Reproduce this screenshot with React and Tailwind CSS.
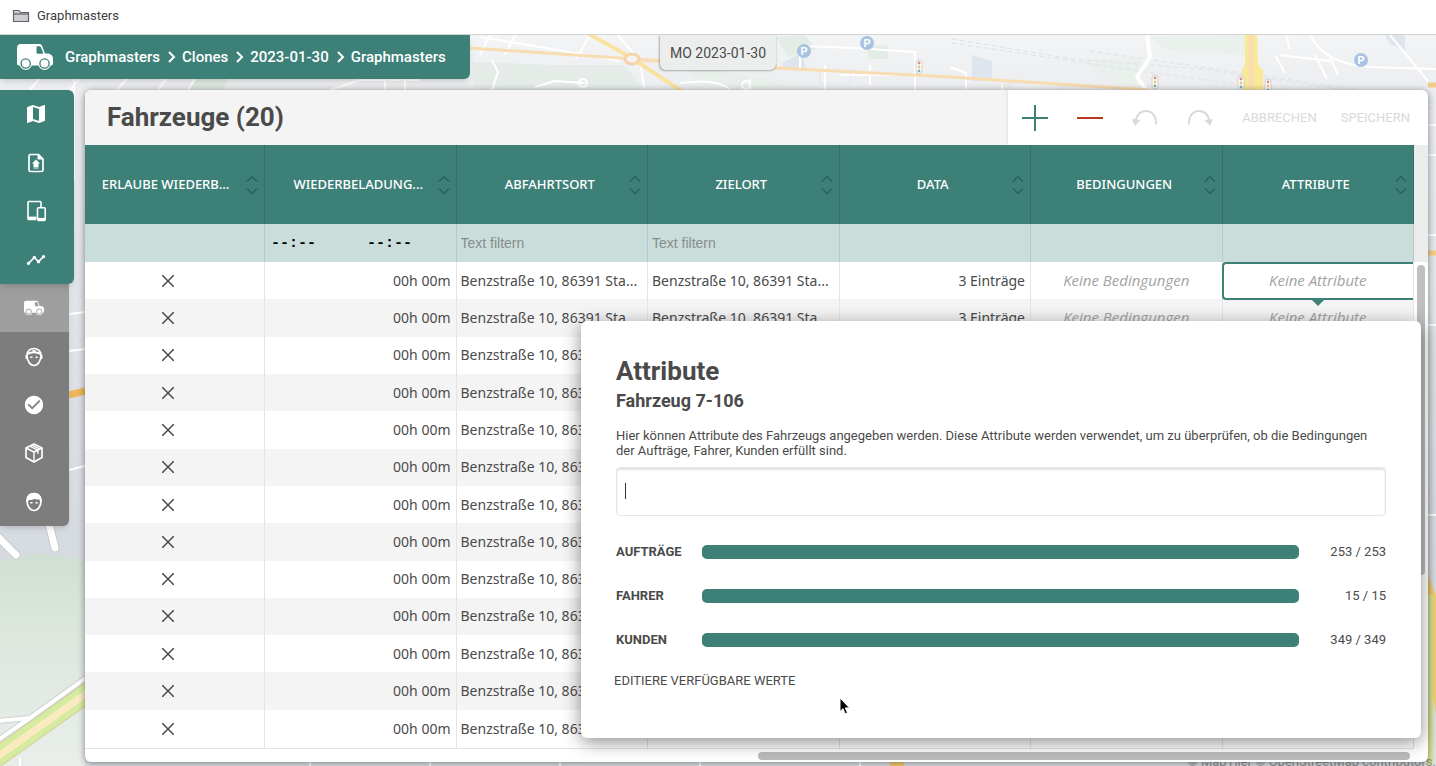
import React from "react";
import { MdMap, MdTimeline, MdCheckCircle } from "react-icons/md";

const crumbs = ["Graphmasters", "Clones", "2023-01-30", "Graphmasters"];

const columns = [
  { title: "ERLAUBE WIEDERB...", filter: null },
  { title: "WIEDERBELADUNG...", filter: "time" },
  { title: "ABFAHRTSORT", filter: "text" },
  { title: "ZIELORT", filter: "text" },
  { title: "DATA", filter: null },
  { title: "BEDINGUNGEN", filter: null },
  { title: "ATTRIBUTE", filter: null },
];

const rows = Array.from({ length: 13 }, (_, i) => ({
  id: i,
  time: "00h 00m",
  from: "Benzstraße 10, 86391 Sta...",
  to: "Benzstraße 10, 86391 Sta...",
  data: "3 Einträge",
}));

const coverage = [
  { label: "AUFTRÄGE", done: 253, total: 253 },
  { label: "FAHRER", done: 15, total: 15 },
  { label: "KUNDEN", done: 349, total: 349 },
];

const VanIcon = ({ className, ring }) => (
  <svg className={className} viewBox="0 0 36 26" fill="currentColor">
    <path
      fillRule="evenodd"
      d="M4 0h18.5c1.200 0 2 .6 2.400 1.600L28 9.600h2.500c3.200 0 5.500 2.300 5.500 5.400v4.500c0 1.200-.8 2-2 2H2c-1.200 0-2-.8-2-2V4c0-2.400 1.600-4 4-4zM20.600 2.200c-.7 0-1.100.5-1.100 1.200v5.200c0 .7.4 1.100 1.100 1.100h4.800c.7 0 1-.5.7-1.200l-2.200-5.300c-.3-.7-.7-1-1.300-1z"
    />
    <circle cx="8.700" cy="19.500" r="6.400" />
    <circle cx="27.500" cy="19.500" r="6.400" />
    <circle cx="8.700" cy="19.500" r="4.600" fill="none" stroke={ring} strokeWidth="1.300" />
    <circle cx="27.500" cy="19.500" r="4.600" fill="none" stroke={ring} strokeWidth="1.300" />
  </svg>
);

const DepotIcon = () => (
  <svg className="w-6 h-6" viewBox="0 0 24 24" fill="none" stroke="currentColor" strokeWidth="1.700" strokeLinejoin="round">
    <path d="M14.500 3.500H6.500a1.500 1.500 0 0 0-1.500 1.500v14a1.500 1.500 0 0 0 1.500 1.500h11a1.500 1.500 0 0 0 1.500-1.500V8z" />
    <path d="M14 3.500V8h5z" fill="currentColor" strokeWidth="1" />
    <path d="M12 8.500l4 4h-1.500v3.500h-5v-3.500H8z" fill="currentColor" stroke="none" />
    <path d="M9.500 17h5" strokeWidth="1" />
  </svg>
);

const DevicesIcon = () => (
  <svg className="w-6 h-6" viewBox="0 0 24 24" fill="none" stroke="currentColor" strokeWidth="1.600" strokeLinejoin="round">
    <path d="M17 8V3.300a.8.800 0 0 0-.8-.8H4.800a.8.800 0 0 0-.8.800v16.400c0 .4.400.800.800.8H12" />
    <path d="M4 18.800h8.500" strokeWidth="2.400" />
    <rect x="13.500" y="8.800" width="7.700" height="12.700" rx="1" />
    <path d="M13.500 20h7.700" strokeWidth="2.200" />
  </svg>
);

const DriverIcon = () => (
  <svg className="w-6 h-6" viewBox="0 0 24 24" fill="none" stroke="currentColor">
    <path d="M5 10c0-3.800 3-6.500 7-6.500s7 2.700 7 6.500c0 5.500-2.800 10.500-7 10.500S5 15.500 5 10z" strokeWidth="1.700" />
    <path d="M5 9c4-1.900 10-1.900 14 0" strokeWidth="2" />
    <path d="M10.500 5.700h3L12 7.500z" fill="currentColor" />
    <path d="M4.300 10v4M19.700 10v4" strokeWidth="1.500" />
    <path d="M8.300 12.200h2.200M13.500 12.200h2.200" strokeWidth="1.500" />
  </svg>
);

const BoxIcon = () => (
  <svg className="w-6 h-6" viewBox="0 0 24 24" fill="none" stroke="currentColor" strokeWidth="1.700" strokeLinejoin="round">
    <path d="M12 3l8 4v9.500l-8 4.500-8-4.500V7z" />
    <path d="M4 7l8 4 8-4M12 11v10" strokeWidth="1.400" />
    <path d="M7.800 5.200l8 4v3.600M10 4.200l7.500 3.700" strokeWidth="1.500" />
  </svg>
);

const CustomerIcon = () => (
  <svg className="w-6 h-6" viewBox="0 0 24 24" fill="none" stroke="currentColor">
    <path d="M5 10.500C5 6.300 8 3.500 12 3.500s7 2.800 7 7c0 5.500-2.800 10-7 10s-7-4.500-7-10z" strokeWidth="1.700" />
    <path d="M4.500 12.500C4 6.500 7 2.700 12 2.700s8 3.800 7.500 9.800c-1.300-.5-1.800-1.800-2-3-2 .3-3.800-.1-5-.8-1.700 1.100-3.800 1.500-5.800 1.300-.2 1.200-.9 2-2.200 2.500z" fill="currentColor" stroke="none" />
    <path d="M8.300 12.800h2.200M13.500 12.800h2.200" strokeWidth="1.500" />
  </svg>
);

const SortIcon = () => (
  <svg className="w-3 h-5 shrink-0" viewBox="0 0 12 20" fill="none" stroke="#2c625b" strokeWidth="1.500">
    <path d="M1 6.500l5-5 5 5M1 13.500l5 5 5-5" />
  </svg>
);

const CrossIcon = () => (
  <svg className="w-3 h-3" viewBox="0 0 12 12" stroke="#4a4a4a" strokeWidth="1.500" aria-label="Nein">
    <path d="M0 0l12 12M12 0L0 12" />
  </svg>
);

const UndoIcon = ({ className = "" }) => (
  <svg className={`w-[26px] h-[26px] ${className}`} viewBox="0 0 26 26" fill="none" stroke="#d9d9d9" strokeWidth="2">
    <path d="M24 19.500C24.500 11 20 6 14 6S4 10.500 4 16" />
    <path d="M0 14l8.500 1L3 21z" fill="#d9d9d9" stroke="none" />
  </svg>
);

const Parking = ({ x, y }) => (
  <g>
    <circle cx={x} cy={y} r="7" fill="#a9c3e2" />
    <text x={x} y={y + 4} textAnchor="middle" fontSize="11" fontWeight="700" fill="#fff" fontFamily="Roboto, sans-serif">P</text>
  </g>
);

const TrafficLight = ({ x, y }) => (
  <g>
    <rect x={x - 3} y={y - 7} width="6" height="14" rx="3" fill="#fff" stroke="#cfcfcf" />
    <circle cx={x} cy={y - 4} r="1.400" fill="#e08a80" />
    <circle cx={x} cy={y} r="1.400" fill="#efc277" />
    <circle cx={x} cy={y + 4} r="1.400" fill="#7fb3a4" />
  </g>
);

const MapBackground = () => (
  <svg className="absolute inset-0 w-full h-full" viewBox="0 0 1436 731" preserveAspectRatio="xMidYMid slice" fill="none" aria-hidden="true">
    <defs>
      <linearGradient id="land" x1="0" y1="0" x2="0" y2="1">
        <stop offset="0" stopColor="#f3f4f5" />
        <stop offset=".1" stopColor="#e9ebee" />
        <stop offset=".7" stopColor="#d6dbe2" />
        <stop offset="1" stopColor="#dcdfe3" />
      </linearGradient>
      <linearGradient id="park" x1="0" y1="0" x2="0" y2="1">
        <stop offset="0" stopColor="#d0dfd3" />
        <stop offset=".4" stopColor="#dde7de" />
        <stop offset="1" stopColor="#e9eeea" />
      </linearGradient>
    </defs>
    <rect width="1436" height="731" fill="url(#land)" />

    {/* parks */}
    <path d="M472 27l80 3 72 0 20 25H474z" fill="#e5ece8" />
    <path d="M690 30l60 12 60 13H700z" fill="#e8eeea" />
    <path d="M776 2l28-2 14 14-30 8zM868 12l20-2v14h-20z" fill="#e4ece6" />
    <path d="M1150 2l95-2v20l-80-5zM1080 25l60-2v32h-10z" fill="#eaf0ec" />
    <path d="M195 44l34 0-6 11h-34z" fill="#dfe9e1" />
    <path d="M0 526q40-14 85 0v205H0z" fill="url(#park)" />

    {/* buildings */}
    <path d="M782 28l20-10 4 14-20 4zM972 20l20 6v20h-20zM1385 0h20v16l-16-8z" fill="#dfe5ee" />
    <path d="M820 36h30v12h-30zM700 4h30v10h-30zM1010 48h50v7h-50z" fill="#eff1f3" stroke="#e0e5eb" />

    {/* rail */}
    <path d="M952 4l120 20 130 10 234 34M952 8l200 30 284 36M1090 16l346 50" stroke="#dde2ea" strokeDasharray="5 3" />

    {/* minor streets */}
    <g stroke="#fff" strokeWidth="2">
      <path d="M30 55l10-12M70 55l12-14M117 55l12-14M158 55l10-14M188 55l8-12M330 55l30-10h60M385 44v12M405 44v12" />
      <path d="M490 0l-10 20M515 0l-10 20M590 0l-14 24M618 0l22 26 4 26M480 2l60 10 80 14M492 25l6 12-6 18M535 52l20-6 30 2" />
      <path d="M680 48c30-4 40 0 50 6M750 44v12M800 35v-24l55 2 60 4v38M825 30v26M840 40h70M870 30v20M950 32l16 6v16M1002 50v5" />
      <path d="M1287 0l2 14M1310 0c10 20 30 30 60 32M1370 32l66 2M1390 0l38 46M1275 20l10 18M1315 20l12 24M1330 22l8 18M1280 20l50 6" />
      <path d="M69 279l16-2M69 316l16-2M69 435l16-4M74 17v130M74 17h11" />
      <path d="M1428 90h8M1428 120h8M1428 200h8M1428 290h8M1428 480h8" />
      <path d="M20 731v-8M310 731v-8M430 731v-8M560 731v-8M700 731v-8M860 731v-8" />
    </g>
    <path d="M1147 0l3 22-13 20 10 14" stroke="#fff" strokeWidth="4" />
    <circle cx="583" cy="48" r="4" stroke="#fff" strokeWidth="2" />
    <circle cx="746" cy="50" r="4" stroke="#fff" strokeWidth="2" />

    {/* main roads */}
    <path d="M470 13l150 10 157 10 173 9 200 13" stroke="#f8dcb2" strokeWidth="3" />
    <path d="M587-2l36 20 10 6 50 33" stroke="#fae3a0" strokeWidth="4" />
    <path d="M638 26l30 1 109 3" stroke="#f8dfbc" strokeWidth="2" />
    <ellipse cx="632" cy="24" rx="7" ry="5" fill="#f1f2f3" stroke="#f6d3a8" strokeWidth="3" />
    <path d="M1245 0h12l1 30 5 5v20h-21V35l3-5z" fill="#f8e996" />
    <path d="M1251 0v55" stroke="#fbdcae" strokeWidth="5" />
    <path d="M69 360l16-4" stroke="#efb65c" strokeWidth="7" />
    <path d="M1428 50h8M1428 218h8" stroke="#f3cd84" strokeWidth="5" />
    <path d="M1420 520l16 40v120l-10-60z" fill="#f4cf73" />
    <path d="M1430 560v170" stroke="#dce894" strokeWidth="6" />
    <path d="M890 729h14" stroke="#f3cd70" strokeWidth="6" />

    {/* lower left */}
    <g strokeLinecap="round">
      <path d="M-4 500l20 20M48 485l7 28" stroke="#c6c9cc" strokeWidth="9" />
      <path d="M-4 500l20 20M48 485l7 28" stroke="#fff" strokeWidth="7" />
    </g>
    <path d="M-2 686l32-3M-2 705l32-22 57-41" stroke="#cfd2d2" strokeWidth="6" />
    <path d="M-2 686l32-3M-2 705l32-22 57-41" stroke="#fff" strokeWidth="4" />
    <path d="M-10 727l100-71" stroke="#d6ce9c" strokeWidth="20" />
    <path d="M-10 727l100-71" stroke="#d5eca0" strokeWidth="18" />
    <path d="M-10 727l100-71" stroke="#fbeac0" strokeWidth="7" />

    <Parking x={804} y={16} />
    <Parking x={867} y={8} />
    <Parking x={1361} y={25} />
    <TrafficLight x={919} y={32} />
    <TrafficLight x={1155} y={47} />
    <TrafficLight x={1241} y={48} />
    <TrafficLight x={1268} y={51} />
  </svg>
);

const SideLink = ({ label, active, children }) => (
  <a
    href="#"
    aria-label={label}
    className={`flex flex-1 items-center justify-center pr-0.5 ${active ? "bg-[#9e9e9e]" : ""}`}
  >
    {children}
  </a>
);

const Sidebar = () => (
  <nav className="w-[74px] shrink-0 text-white">
    <div className="relative z-10 flex flex-col h-[194px] rounded-r-md bg-[#3d8078] shadow-md">
      <SideLink label="Karte"><MdMap size={24} /></SideLink>
      <SideLink label="Depots"><DepotIcon /></SideLink>
      <SideLink label="Geräte"><DevicesIcon /></SideLink>
      <SideLink label="Statistik"><MdTimeline size={20} /></SideLink>
    </div>
    <div className="flex flex-col w-[69px] h-[242px] rounded-br-md bg-[#7d7d7d] shadow-md">
      <SideLink label="Fahrzeuge" active><VanIcon className="w-5 h-4" ring="#808080" /></SideLink>
      <SideLink label="Fahrer"><DriverIcon /></SideLink>
      <SideLink label="Aufträge"><MdCheckCircle size={22} /></SideLink>
      <SideLink label="Pakete"><BoxIcon /></SideLink>
      <SideLink label="Kunden"><CustomerIcon /></SideLink>
    </div>
  </nav>
);

const FilterCell = ({ type, title }) => {
  if (type === "time") {
    return (
      <div className="flex pl-1.5 pt-0.5">
        <input aria-label={`${title} von`} defaultValue="--:--" className="w-24 bg-transparent font-['Liberation_Mono',monospace] text-[15px] font-bold text-black outline-none" />
        <input aria-label={`${title} bis`} defaultValue="--:--" className="w-20 bg-transparent font-['Liberation_Mono',monospace] text-[15px] font-bold text-black outline-none" />
      </div>
    );
  }
  if (type === "text") {
    return (
      <input aria-label={title} placeholder="Text filtern" className="w-full pl-1 bg-transparent font-['Liberation_Sans',sans-serif] text-sm placeholder:text-[#868e8d] outline-none" />
    );
  }
  return null;
};

const VehicleTable = () => (
  <table className="w-full h-full table-fixed border-separate border-spacing-0 font-['Noto_Sans',sans-serif] text-sm text-[#4a4a4a]">
    <thead>
      <tr className="h-[79px] bg-[#3d8078] text-white">
        {columns.map((col, i) => (
          <th key={col.title} className={`p-0 border-r border-[#347069] text-[13px] font-medium ${i === 0 ? "w-[180px]" : ""}`}>
            <div className={`flex items-center pr-1.5 ${i === 0 ? "" : "pl-3.5"}`}>
              <span className="flex-1 whitespace-nowrap text-center">{col.title}</span>
              <SortIcon />
            </div>
          </th>
        ))}
      </tr>
      <tr className="h-[38px] bg-[#c9dddb]">
        {columns.map((col) => (
          <td key={col.title} className="p-0 border-r border-[#b5cbc8]">
            <FilterCell type={col.filter} title={col.title} />
          </td>
        ))}
      </tr>
    </thead>
    <tbody>
      {rows.map((row, i) => {
        const last = i === rows.length - 1 ? "border-b" : "";
        const cell = `py-0 border-r border-[#e4e4e4] whitespace-nowrap overflow-hidden ${last}`;
        return (
          <tr key={row.id} className={i % 2 ? "bg-[#f4f4f4]" : "bg-white"}>
            <td className={`${cell} pl-0 pr-3.5`}>
              <div className="flex justify-center"><CrossIcon /></div>
            </td>
            <td className={`${cell} pl-0 pr-[5px] text-right`}>{row.time}</td>
            <td className={`${cell} pl-1 pr-0`}>{row.from}</td>
            <td className={`${cell} pl-1 pr-0`}>{row.to}</td>
            <td className={`${cell} pl-0 pr-[5px] text-right`}>{row.data}</td>
            <td className={`${cell} px-0 text-center text-[15px] italic text-[#a3a3a3] font-['Open_Sans',sans-serif]`}>Keine Bedingungen</td>
            <td className={`relative py-0 px-0 border-r border-[#e4e4e4] text-center text-[15px] italic text-[#a3a3a3] font-['Open_Sans',sans-serif] ${last}`}>
              Keine Attribute
              {i === 0 && (
                <span className="absolute z-10 top-0 -bottom-px -left-px right-0 border-2 border-r-0 border-[#3d8078] rounded-l-sm">
                  <svg className="absolute top-full left-1/2 -translate-x-1/2 w-4 h-2" viewBox="0 0 16 8">
                    <path d="M0 0h16L8 8z" fill="#3d8078" />
                  </svg>
                </span>
              )}
            </td>
          </tr>
        );
      })}
    </tbody>
  </table>
);

const AttributeDialog = () => (
  <section
    role="dialog"
    aria-labelledby="dialog-title"
    className="absolute z-20 top-[231px] right-[7px] w-[840px] px-[35px] pt-9 pb-[49px] rounded-md bg-white shadow-[0_4px_18px_rgba(0,0,0,0.45)] text-[#4a4a4a]"
  >
    <h2 id="dialog-title" className="text-[26px] leading-7 font-bold">Attribute</h2>
    <h3 className="mt-1 text-lg leading-6 font-bold">Fahrzeug 7-106</h3>
    <label htmlFor="attributes" className="block mt-[15px] text-[13px] leading-[15px]">
      Hier können Attribute des Fahrzeugs angegeben werden. Diese Attribute werden verwendet, um zu überprüfen, ob die Bedingungen der Aufträge, Fahrer, Kunden erfüllt sind.
    </label>
    <div className="relative mt-[9px]">
      <input id="attributes" className="block w-full h-[49px] px-2 rounded border border-[#e6e6e6] shadow-[inset_0_2px_2px_rgba(0,0,0,0.12)] outline-none" />
      <span className="absolute left-[9px] top-4 w-px h-4 bg-[#333]" />
    </div>
    <dl className="mt-[22px]">
      {coverage.map((item) => (
        <div key={item.label} className="flex items-center h-7 mb-4 text-[13px]">
          <dt className="w-[86px] font-bold">{item.label}</dt>
          <dd className="flex flex-1 items-center">
            <div className="flex-1 rounded-[5px] bg-[#dfe8e7]">
              <div className="h-[14px] rounded-[5px] bg-[#3d8078]" style={{ width: `${(item.done / item.total) * 100}%` }} />
            </div>
            <span className="w-[87px] text-right">{item.done} / {item.total}</span>
          </dd>
        </div>
      ))}
    </dl>
    <button type="button" className="block mt-[19px] -ml-0.5 text-[13px] leading-4">EDITIERE VERFÜGBARE WERTE</button>
    <svg className="absolute left-[258px] top-[376px] w-3 h-[18px]" viewBox="0 0 12 18">
      <path d="M1 1v13.500l3-2.800 2.200 5 2.300-1-2.200-4.800h4.200z" fill="#000" stroke="#fff" strokeWidth="1" />
    </svg>
  </section>
);

const App = () => (
  <div className="flex flex-col h-screen overflow-hidden bg-white font-['Roboto',sans-serif]">
    <div className="flex items-center h-[35px] shrink-0 gap-[7px] px-3 pb-0.5 border-b border-[#d2d2d2] text-[13px] text-[#3c4043]">
      <svg className="w-[18px] h-[14px]" viewBox="0 0 18 14" fill="#cbcdd0" stroke="#5f6368" strokeWidth="1.200">
        <path d="M1.500 12.500V1.500h5.500l1.500 2H16.500v9z" />
        <path d="M1.500 5h15" />
      </svg>
      <a href="#">Graphmasters</a>
    </div>

    <div className="relative flex flex-col flex-1 min-h-0">
      <MapBackground />
      <span className="absolute right-0 -bottom-1 text-[13px] leading-4 text-[#8d9092] whitespace-nowrap">© MapTiler © OpenStreetMap contributors.</span>

      <header className="relative flex items-start shrink-0">
        <nav className="flex items-center h-11 pl-[17px] pr-6 rounded-br-md bg-[#3d8078] shadow-md text-[15px] font-medium text-white">
          <VanIcon className="w-9 h-[26px] mr-3" ring="#3d8078" />
          {crumbs.map((crumb, i) => (
            <React.Fragment key={i}>
              {i > 0 && (
                <svg className="w-[22px] h-3" viewBox="0 0 22 12" fill="none" stroke="currentColor" strokeWidth="2">
                  <path d="M9 1l5 5-5 5" />
                </svg>
              )}
              <a href="#">{crumb}</a>
            </React.Fragment>
          ))}
        </nav>
        <button type="button" className="absolute left-1/2 -translate-x-1/2 h-[35px] px-2.5 rounded-b-md bg-[#eceeee] shadow-[0_1px_2px_rgba(0,0,0,0.3)] text-sm whitespace-nowrap text-[#4a4a4a]">
          MO 2023-01-30
        </button>
      </header>

      <div className="relative flex flex-1 min-h-0 gap-[11px] pt-[11px] pr-2 pb-1">
        <Sidebar />
        <main className="relative flex flex-col flex-1 min-w-0 rounded-md bg-white shadow-[0_1px_7px_rgba(0,0,0,0.45)]">
          <div className="flex h-[55px] shrink-0 rounded-t-md overflow-hidden">
            <div className="flex flex-1 items-center pl-[22px] bg-[#f4f4f4]">
              <h1 className="text-[26px] font-bold text-[#4a4a4a]">Fahrzeuge (20)</h1>
            </div>
            <div className="flex items-center gap-[29px] pl-3.5 pr-[18px] border-l-2 border-[#ebebeb] text-[13px] text-[#d9d9d9]">
              <button type="button" aria-label="Hinzufügen">
                <svg className="w-[26px] h-[26px]" viewBox="0 0 26 26" stroke="#3d8078" strokeWidth="2"><path d="M13 0v26M0 13h26" /></svg>
              </button>
              <button type="button" aria-label="Entfernen">
                <svg className="w-[26px] h-[26px]" viewBox="0 0 26 26" stroke="#b93a1d" strokeWidth="2"><path d="M0 13h26" /></svg>
              </button>
              <button type="button" aria-label="Rückgängig"><UndoIcon /></button>
              <button type="button" aria-label="Wiederholen"><UndoIcon className="-scale-x-100" /></button>
              <div className="flex gap-6">
                <button type="button">ABBRECHEN</button>
                <button type="button">SPEICHERN</button>
              </div>
            </div>
          </div>

          <div className="flex flex-1 min-h-0">
            <div className="flex-1 min-w-0">
              <VehicleTable />
            </div>
            <div className="w-3.5 shrink-0">
              <div className="h-[117px] bg-[#ebeded]" />
              <div className="mt-[3px] mx-auto w-2 h-[310px] rounded-full bg-[#bfbfbf]" />
            </div>
          </div>
          <div className="flex justify-end items-center h-[13px] shrink-0 pr-[18px]">
            <div className="w-[652px] h-2 rounded-full bg-[#bbb]" />
          </div>
          <AttributeDialog />
        </main>
      </div>
    </div>
  </div>
);

export default App;
